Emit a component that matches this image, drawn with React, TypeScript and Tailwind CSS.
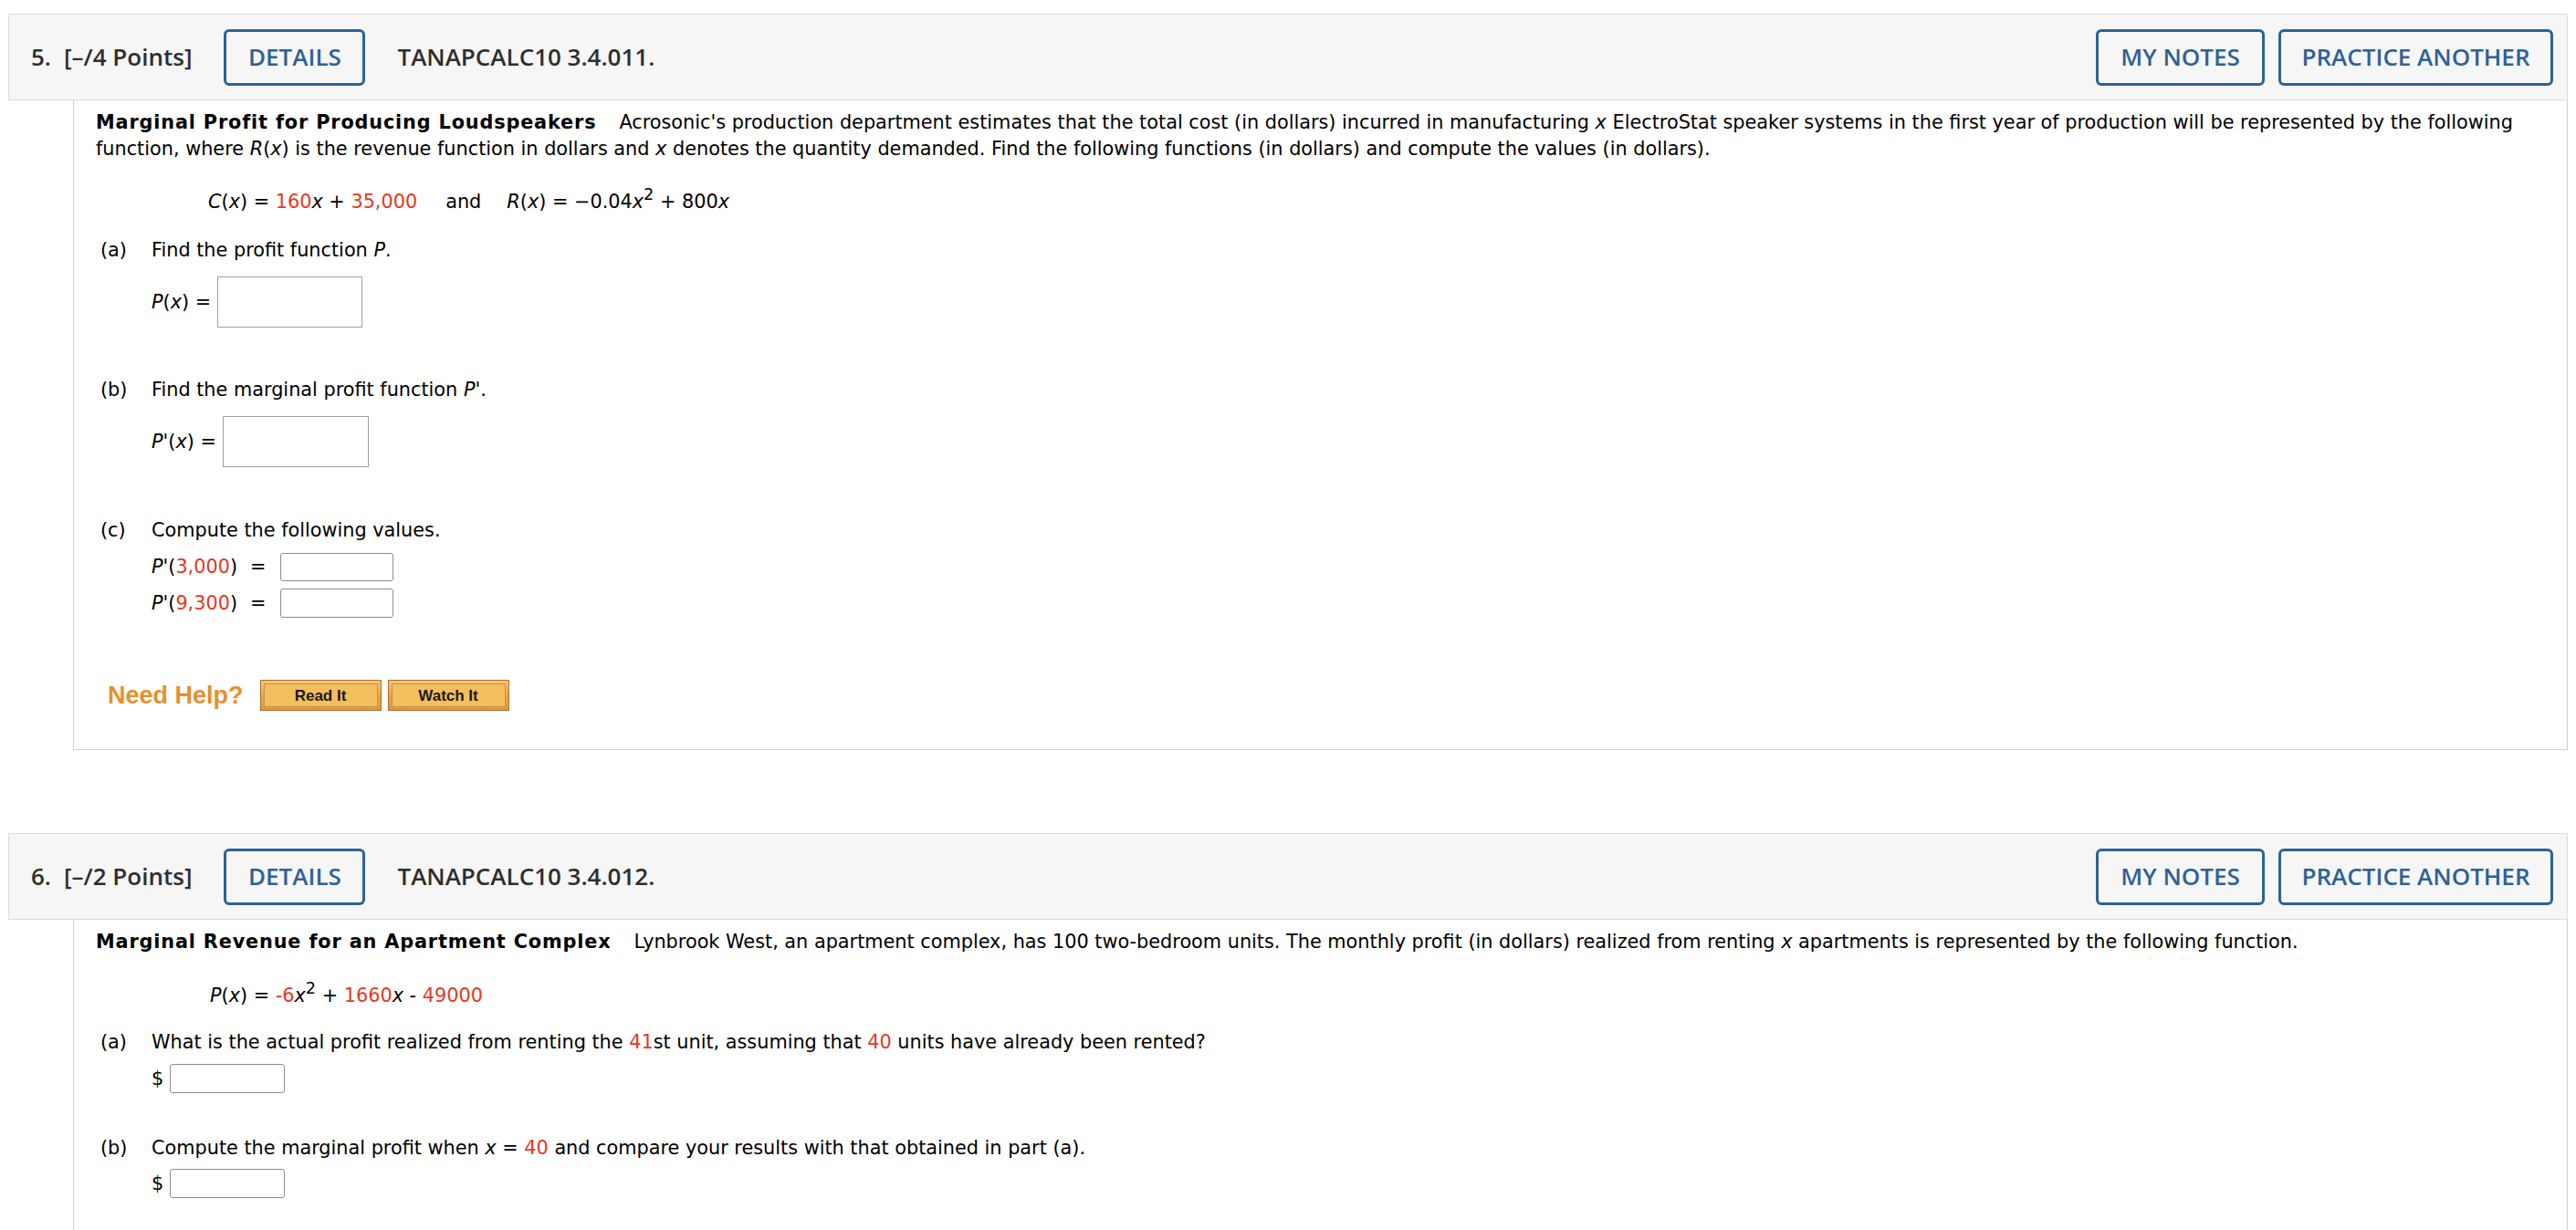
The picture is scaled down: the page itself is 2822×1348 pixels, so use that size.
import React from 'react';

const RED = 'text-[#e8371f]';

function Header({ num, points, code }: { num: string; points: string; code: string }) {
  return (
    <div className="h-[95px] border border-[#dcdcdc] bg-[#f6f6f6] flex items-center pl-[24px] pr-[15px] font-['Open_Sans',sans-serif] font-semibold text-[26px] text-[#2e2e2e]">
      <span className="mr-[14px]">{num}</span>
      <span>{points}</span>
      <button className="ml-[35px] w-[155px] h-[62px] border-[3px] border-[#2c6298] rounded-[6px] text-[#2c6298]">
        DETAILS
      </button>
      <span className="ml-[35px]">{code}</span>
      <div className="ml-auto flex gap-[15px]">
        <button className="w-[185px] h-[62px] border-[3px] border-[#2c6298] rounded-[6px] text-[#2c6298]">
          MY NOTES
        </button>
        <button className="w-[301px] h-[62px] border-[3px] border-[#2c6298] rounded-[6px] text-[#2c6298]">
          PRACTICE ANOTHER
        </button>
      </div>
    </div>
  );
}

function Part({ label, children }: { label: string; children: React.ReactNode }) {
  return (
    <div className="flex ml-[5px]">
      <span className="w-[56px] shrink-0">{label}</span>
      <span>{children}</span>
    </div>
  );
}

function HelpButton({ label }: { label: string }) {
  return (
    <div className="w-[133px] h-[34px] border border-[#a8732e] bg-gradient-to-b from-[#f6c27a] via-[#f0a445] to-[#e8943a] p-[3px]">
      <div className="h-full border border-[#c39452] bg-[#f3be5c] flex items-center justify-center font-['Liberation_Sans',Arial,sans-serif] font-bold text-[17px] text-[#1a1a1a]">
        {label}
      </div>
    </div>
  );
}

export default function App() {
  return (
    <div className="min-h-screen bg-white pt-[15px] px-[9px] font-['DejaVu_Sans',Verdana,sans-serif] text-[20.8px] leading-[29px] text-black">
      {/* Question 5 */}
      <Header num="5." points="[–/4 Points]" code="TANAPCALC10 3.4.011." />
      <div className="ml-[71px] h-[712px] border-x border-b border-[#cfcfcf] pl-[24px] pr-[24px] pt-[10px]">
        <p>
          <b className="tracking-[0.85px]">Marginal Profit for Producing Loudspeakers</b>
          <span className="inline-block w-[25px]" />
          Acrosonic's production department estimates that the total cost (in dollars) incurred in manufacturing <i>x</i> ElectroStat speaker systems in the first year of production will be represented by the following function, where <i>R</i>(<i>x</i>) is the revenue function in dollars and <i>x</i> denotes the quantity demanded. Find the following functions (in dollars) and compute the values (in dollars).
        </p>
        <div className="mt-[29px] ml-[123px]">
          <i>C</i>(<i>x</i>) = <span className={RED}>160</span><i>x</i> + <span className={RED}>35,000</span>
          <span className="ml-[31px]">and</span>
          <span className="ml-[28px]">
            <i>R</i>(<i>x</i>) = −0.04<i>x</i><sup className="text-[85%]">2</sup> + 800<i>x</i>
          </span>
        </div>
        <div className="mt-[24px]">
          <Part label="(a)">
            Find the profit function <i>P</i>.
          </Part>
        </div>
        <div className="mt-[14px] ml-[61px] flex items-center gap-[7px]">
          <span>
            <i>P</i>(<i>x</i>) =
          </span>
          <div className="w-[159px] h-[56px] border border-[#a0a0a0]" />
        </div>
        <div className="mt-[54px]">
          <Part label="(b)">
            Find the marginal profit function <i>P</i>'.
          </Part>
        </div>
        <div className="mt-[14px] ml-[61px] flex items-center gap-[7px]">
          <span>
            <i>P</i>'(<i>x</i>) =
          </span>
          <div className="w-[160px] h-[56px] border border-[#a0a0a0]" />
        </div>
        <div className="mt-[55px]">
          <Part label="(c)">Compute the following values.</Part>
        </div>
        <div className="mt-[10px] ml-[61px] flex items-center">
          <span>
            <i>P</i>'(<span className={RED}>3,000</span>)
          </span>
          <span className="ml-[14px]">=</span>
          <div className="ml-[15px] w-[124px] h-[31px] border border-[#8c8c8c] rounded-[3px]" />
        </div>
        <div className="mt-[8px] ml-[61px] flex items-center">
          <span>
            <i>P</i>'(<span className={RED}>9,300</span>)
          </span>
          <span className="ml-[14px]">=</span>
          <div className="ml-[15px] w-[124px] h-[32px] border border-[#8c8c8c] rounded-[3px]" />
        </div>
        <div className="mt-[68px] ml-[13px] flex items-center">
          <span className="font-['Liberation_Sans',Arial,sans-serif] font-bold text-[27px] text-[#e6902f]">Need Help?</span>
          <div className="ml-[18px]">
            <HelpButton label="Read It" />
          </div>
          <div className="ml-[7px]">
            <HelpButton label="Watch It" />
          </div>
        </div>
      </div>

      {/* Question 6 */}
      <div className="mt-[91px]">
        <Header num="6." points="[–/2 Points]" code="TANAPCALC10 3.4.012." />
      </div>
      <div className="ml-[71px] border-x border-b border-[#cfcfcf] pl-[24px] pr-[24px] pt-[10px] pb-[80px]">
        <p>
          <b className="tracking-[0.85px]">Marginal Revenue for an Apartment Complex</b>
          <span className="inline-block w-[25px]" />
          Lynbrook West, an apartment complex, has 100 two-bedroom units. The monthly profit (in dollars) realized from renting <i>x</i> apartments is represented by the following function.
        </p>
        <div className="mt-[30px] ml-[125px]">
          <i>P</i>(<i>x</i>) = <span className={RED}>-6</span><i>x</i><sup className="text-[85%]">2</sup> + <span className={RED}>1660</span><i>x</i> - <span className={RED}>49000</span>
        </div>
        <div className="mt-[22px]">
          <Part label="(a)">
            What is the actual profit realized from renting the <span className={RED}>41</span>st unit, assuming that <span className={RED}>40</span> units have already been rented?
          </Part>
        </div>
        <div className="mt-[9px] ml-[61px] flex items-center gap-[7px]">
          <span>$</span>
          <div className="w-[126px] h-[32px] border border-[#8c8c8c] rounded-[3px]" />
        </div>
        <div className="mt-[46px]">
          <Part label="(b)">
            Compute the marginal profit when <i>x</i> = <span className={RED}>40</span> and compare your results with that obtained in part (a).
          </Part>
        </div>
        <div className="mt-[8px] ml-[61px] flex items-center gap-[7px]">
          <span>$</span>
          <div className="w-[126px] h-[32px] border border-[#8c8c8c] rounded-[3px]" />
        </div>
      </div>
    </div>
  );
}
